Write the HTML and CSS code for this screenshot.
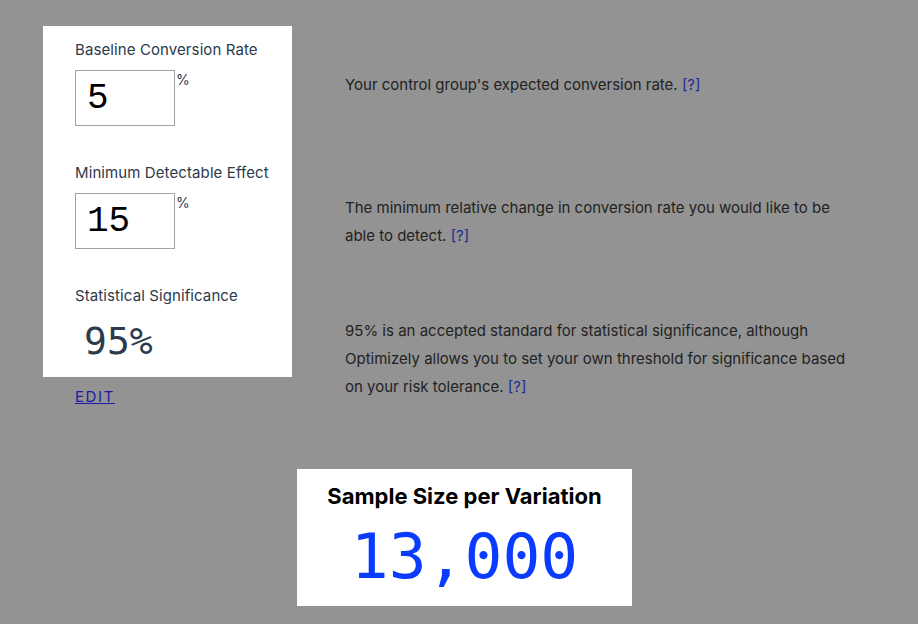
FILE: index.html
```html
<!DOCTYPE html>
<html>
<head>
<meta charset="utf-8">
<link rel="stylesheet" href="styles.css">
</head>
<body>
<div class="page">
  <div class="grid">
    <div class="cell first">
      <div class="label">Baseline Conversion Rate</div>
      <div class="field"><input class="num" value="5"><span class="pct">%</span></div>
    </div>
    <div class="desc"><p>Your control group's expected conversion rate. <a href="#">[?]</a></p></div>

    <div class="cell">
      <div class="label">Minimum Detectable Effect</div>
      <div class="field"><input class="num" value="15"><span class="pct">%</span></div>
    </div>
    <div class="desc"><p>The minimum relative change in conversion rate you would like to be able to detect. <a href="#">[?]</a></p></div>

    <div class="cell last">
      <div class="label">Statistical Significance</div>
      <div class="sig">95%</div>
    </div>
    <div class="desc"><p>95% is an accepted standard for statistical significance, although Optimizely allows you to set your own threshold for significance based on your risk tolerance. <a href="#">[?]</a></p></div>
  </div>
  <a class="edit" href="#">EDIT</a>
  <div class="result-wrap">
    <div class="result">
      <div class="result-title">Sample Size per Variation</div>
      <div class="result-num">13,000</div>
    </div>
  </div>
</div>
</body>
</html>
```
FILE: styles.css
```css
html, body {
  margin: 0;
  padding: 0;
  background: #939393;
}
body {
  font-family: Inter, "Noto Sans", sans-serif;
  color: #222;
}
.page {
  padding: 26px 0 0 43px;
  width: 843px;
}
.grid {
  display: grid;
  grid-template-columns: 249px 1fr;
  grid-template-rows: 123px 123px 105px;
  column-gap: 53px;
}
.cell {
  background: #fff;
  padding: 14px 0 0 32px;
}
.label {
  font-size: 15px;
  line-height: 20px;
  color: #2c3a4b;
  letter-spacing: 0.1px;
}
.field {
  display: flex;
  align-items: flex-start;
  margin-top: 10px;
}
.num {
  box-sizing: border-box;
  width: 100px;
  height: 56px;
  border: 1px solid #a3a3a3;
  padding: 0 0 0 11px;
  margin: 0;
  font-family: "Liberation Mono", monospace;
  font-size: 36px;
  color: #000;
  background: #fff;
  outline: none;
}
.pct {
  font-size: 14px;
  color: #2c3a4b;
  margin: 2px 0 0 1px;
  line-height: 16px;
}
.sig {
  margin: 15px 0 0 9px;
  font-family: "DejaVu Sans Mono", monospace;
  font-size: 38px;
  line-height: 40px;
  color: #2c3a4b;
}
.desc p {
  margin: 45px 0 0 0;
  font-size: 15px;
  line-height: 28px;
  color: #222;
  max-width: 510px;
}
.desc a {
  color: #1e2a98;
  text-decoration: none;
}
.edit {
  display: inline-block;
  margin: 10px 0 0 32px;
  font-size: 15px;
  line-height: 20px;
  letter-spacing: 1.6px;
  color: #1a1aa6;
  text-decoration: underline;
}
.result-wrap {
  display: flex;
  justify-content: center;
  margin-top: 62px;
}
.result {
  background: #fff;
  width: 335px;
  height: 137px;
  box-sizing: border-box;
  text-align: center;
  padding-top: 14px;
}
.result-title {
  font-size: 22px;
  font-weight: 700;
  line-height: 26px;
  color: #000;
  letter-spacing: 0;
}
.result-num {
  margin-top: 13px;
  font-family: "DejaVu Sans Mono", monospace;
  font-size: 63px;
  line-height: 70px;
  color: #0a3cff;
}
```
